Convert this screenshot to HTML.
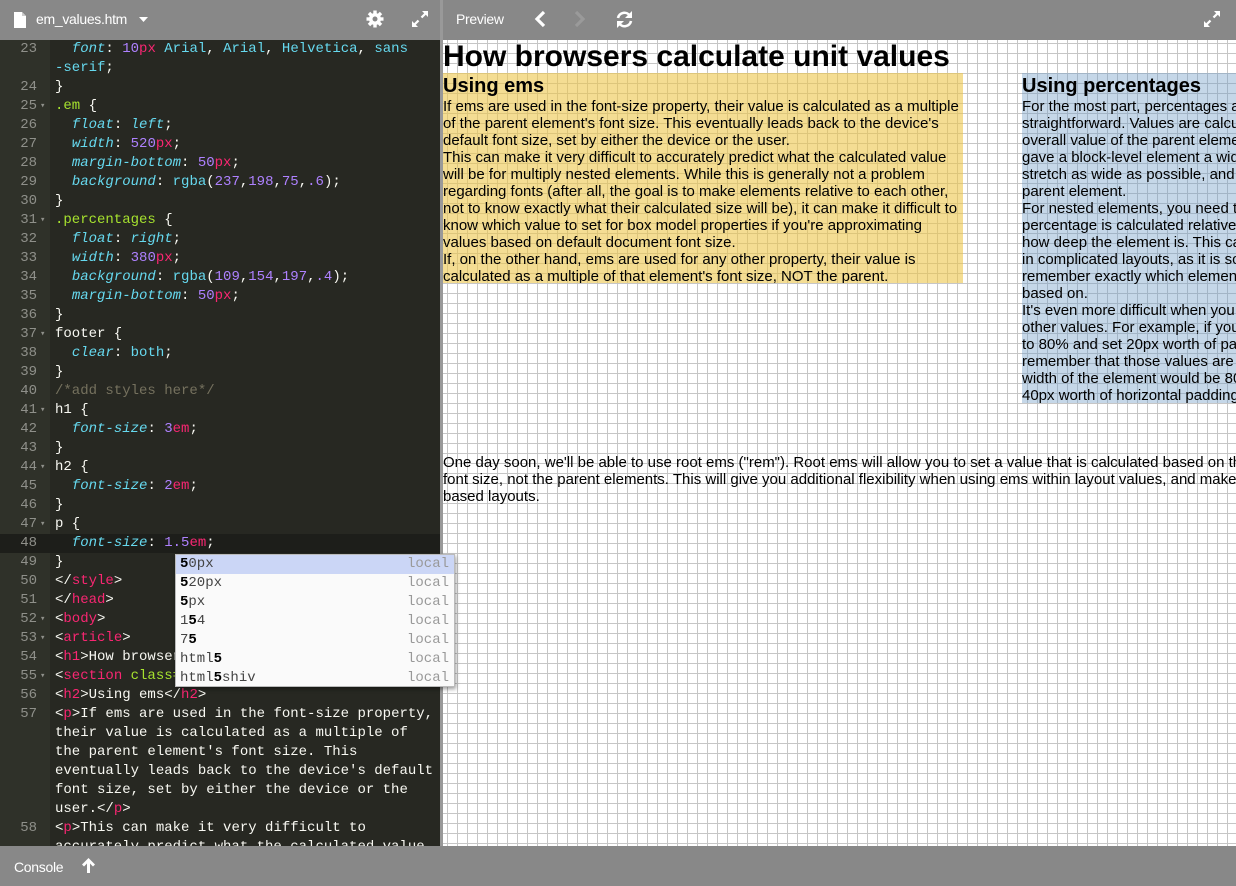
<!DOCTYPE html>
<html><head><meta charset="utf-8"><style>
*{margin:0;padding:0;box-sizing:border-box}
body{width:1236px;height:886px;overflow:hidden;background:#888;font-family:"Liberation Sans",Arial,sans-serif;position:relative}
.bar{position:absolute;left:0;top:0;width:1236px;height:40px;background:#888}
.sep{position:absolute;left:440px;top:0;width:3px;height:846px;background:#999}
.bt{position:absolute;color:#fff;font-size:14px;letter-spacing:-0.3px}
.editor{position:absolute;left:0;top:40px;width:440px;height:806px;background:#272822;overflow:hidden}
.gutter{position:absolute;left:0;top:0;width:50px;height:806px;background:#2f3129}
.code{position:absolute;left:0;top:0px;width:440px;font-family:"Liberation Mono",monospace;font-size:14px;color:#f8f8f2}
.r{height:19px;line-height:19px;white-space:pre;position:relative}
.n{display:inline-block;width:37px;text-align:right;color:#8f908a;margin-right:18px}
.f{position:absolute;left:40px;top:0;color:#8f908a;font-size:9px}
.act{background:#1d1e1a}
.p{color:#66d9ef;font-style:italic}.v{color:#ae81ff}.u{color:#f92672}.s{color:#a6e22e}.c{color:#66d9ef}.t{color:#f92672}.cm{color:#75715e}
.pop{position:absolute;z-index:5;left:175px;top:554px;width:280px;height:133px;background:#fafafa;border:1px solid #bbb;box-shadow:1px 2px 4px rgba(0,0,0,.4);font-family:"Liberation Mono",monospace;font-size:14px;color:#444}
.pop div{height:19px;line-height:19px;padding-left:4px;position:relative}
.pop div i{position:absolute;right:5px;font-style:normal;color:#999}
.pop b{color:#000}
.pop .sel{background:#cbd6f6}
.prev{position:absolute;left:443px;top:40px;width:793px;height:806px;background-color:#fff;
background-image:linear-gradient(to right,#c6c6c6 1px,transparent 1px),linear-gradient(to bottom,#c6c6c6 1px,transparent 1px);
background-size:10px 10px;background-position:4px 3px;overflow:hidden;color:#000}
.h1{position:absolute;left:0;top:0;font-size:30px;font-weight:bold;line-height:34px;white-space:nowrap}
.box{position:absolute;font-size:15px;line-height:17px;white-space:nowrap;overflow:hidden}
.box h2{font-size:20px;line-height:24px;margin-top:1px;margin-bottom:0}
.foot{position:absolute;left:0;top:414px;font-size:15px;line-height:17px;white-space:nowrap}
.bot{position:absolute;left:0;top:846px;width:1236px;height:40px;background:#888}
</style></head><body>
<div class="bar"></div>
<svg style="position:absolute;left:14px;top:12px" width="12" height="16" viewBox="0 0 12 16"><path d="M0 0h8l4 4v12H0z" fill="#fff"/><path d="M8 0v4h4" fill="#ccc"/></svg>
<div class="bt" style="left:36px;top:11px">em_values.htm</div>
<svg style="position:absolute;left:139px;top:17px" width="9" height="6"><path d="M0 0h9L4.5 5z" fill="#fff"/></svg>
<svg style="position:absolute;left:366px;top:10px" width="18" height="18" viewBox="0 0 18 18"><g fill="#fff"><circle cx="9" cy="9" r="6"/><rect x="7.3" y="0.5" width="3.4" height="17"/><rect x="0.5" y="7.3" width="17" height="3.4"/><rect x="7.3" y="0.5" width="3.4" height="17" transform="rotate(45 9 9)"/><rect x="7.3" y="0.5" width="3.4" height="17" transform="rotate(-45 9 9)"/></g><circle cx="9" cy="9" r="2.5" fill="#888"/></svg>
<svg style="position:absolute;left:411px;top:10px" width="18" height="18" viewBox="0 0 18 18"><g fill="#fff"><path d="M11 1h6v6l-2.2-2.2-3.5 3.5-1.6-1.6 3.5-3.5z"/><path d="M7 17H1v-6l2.2 2.2 3.5-3.5 1.6 1.6-3.5 3.5z"/></g></svg>
<div class="sep"></div>
<div class="bt" style="left:456px;top:11px">Preview</div>
<svg style="position:absolute;left:533px;top:10px" width="14" height="18"><path d="M11 2L4 9l7 7" stroke="#fff" stroke-width="3.2" fill="none"/></svg>
<svg style="position:absolute;left:573px;top:10px" width="14" height="18"><path d="M3 2l7 7-7 7" stroke="#9a9a9a" stroke-width="3.2" fill="none"/></svg>
<svg style="position:absolute;left:615px;top:10px" width="19" height="19" viewBox="0 0 19 19"><g stroke="#fff" stroke-width="2.6" fill="none"><path d="M3 8a6.5 6.5 0 0 1 12-2"/><path d="M16 11a6.5 6.5 0 0 1-12 2"/></g><path d="M17 1v7h-7z" fill="#fff"/><path d="M2 18v-7h7z" fill="#fff"/></svg>
<svg style="position:absolute;left:1203px;top:10px" width="18" height="18" viewBox="0 0 18 18"><g fill="#fff"><path d="M11 1h6v6l-2.2-2.2-3.5 3.5-1.6-1.6 3.5-3.5z"/><path d="M7 17H1v-6l2.2 2.2 3.5-3.5 1.6 1.6-3.5 3.5z"/></g></svg>

<div class="editor"><div class="gutter"></div>
<div class="code">
<div class="r"><span class="n">23</span>  <span class="p">font</span>: <span class="v">10</span><span class="u">px</span> <span class="c">Arial</span>, <span class="c">Arial</span>, <span class="c">Helvetica</span>, <span class="c">sans</span></div>
<div class="r"><span class="n"></span><span class="c">-serif</span>;</div>
<div class="r"><span class="n">24</span>}</div>
<div class="r"><span class="n">25</span><span class="f">▾</span><span class="s">.em</span> {</div>
<div class="r"><span class="n">26</span>  <span class="p">float</span>: <span class="p">left</span>;</div>
<div class="r"><span class="n">27</span>  <span class="p">width</span>: <span class="v">520</span><span class="u">px</span>;</div>
<div class="r"><span class="n">28</span>  <span class="p">margin-bottom</span>: <span class="v">50</span><span class="u">px</span>;</div>
<div class="r"><span class="n">29</span>  <span class="p">background</span>: <span class="c">rgba</span>(<span class="v">237</span>,<span class="v">198</span>,<span class="v">75</span>,<span class="v">.6</span>);</div>
<div class="r"><span class="n">30</span>}</div>
<div class="r"><span class="n">31</span><span class="f">▾</span><span class="s">.percentages</span> {</div>
<div class="r"><span class="n">32</span>  <span class="p">float</span>: <span class="p">right</span>;</div>
<div class="r"><span class="n">33</span>  <span class="p">width</span>: <span class="v">380</span><span class="u">px</span>;</div>
<div class="r"><span class="n">34</span>  <span class="p">background</span>: <span class="c">rgba</span>(<span class="v">109</span>,<span class="v">154</span>,<span class="v">197</span>,<span class="v">.4</span>);</div>
<div class="r"><span class="n">35</span>  <span class="p">margin-bottom</span>: <span class="v">50</span><span class="u">px</span>;</div>
<div class="r"><span class="n">36</span>}</div>
<div class="r"><span class="n">37</span><span class="f">▾</span>footer {</div>
<div class="r"><span class="n">38</span>  <span class="p">clear</span>: <span class="c">both</span>;</div>
<div class="r"><span class="n">39</span>}</div>
<div class="r"><span class="n">40</span><span class="cm">/*add styles here*/</span></div>
<div class="r"><span class="n">41</span><span class="f">▾</span>h1 {</div>
<div class="r"><span class="n">42</span>  <span class="p">font-size</span>: <span class="v">3</span><span class="u">em</span>;</div>
<div class="r"><span class="n">43</span>}</div>
<div class="r"><span class="n">44</span><span class="f">▾</span>h2 {</div>
<div class="r"><span class="n">45</span>  <span class="p">font-size</span>: <span class="v">2</span><span class="u">em</span>;</div>
<div class="r"><span class="n">46</span>}</div>
<div class="r"><span class="n">47</span><span class="f">▾</span>p {</div>
<div class="r act"><span class="n">48</span>  <span class="p">font-size</span>: <span class="v">1.5</span><span class="u">em</span>;</div>
<div class="r"><span class="n">49</span>}</div>
<div class="r"><span class="n">50</span>&lt;/<span class="t">style</span>&gt;</div>
<div class="r"><span class="n">51</span>&lt;/<span class="t">head</span>&gt;</div>
<div class="r"><span class="n">52</span><span class="f">▾</span>&lt;<span class="t">body</span>&gt;</div>
<div class="r"><span class="n">53</span><span class="f">▾</span>&lt;<span class="t">article</span>&gt;</div>
<div class="r"><span class="n">54</span>&lt;<span class="t">h1</span>&gt;How browsers calculate</div>
<div class="r"><span class="n">55</span><span class="f">▾</span>&lt;<span class="t">section</span> <span class="s">class=</span>"em"&gt;</div>
<div class="r"><span class="n">56</span>&lt;<span class="t">h2</span>&gt;Using ems&lt;/<span class="t">h2</span>&gt;</div>
<div class="r"><span class="n">57</span>&lt;<span class="t">p</span>&gt;If ems are used in the font-size property,</div>
<div class="r"><span class="n"></span>their value is calculated as a multiple of</div>
<div class="r"><span class="n"></span>the parent element's font size. This</div>
<div class="r"><span class="n"></span>eventually leads back to the device's default</div>
<div class="r"><span class="n"></span>font size, set by either the device or the</div>
<div class="r"><span class="n"></span>user.&lt;/<span class="t">p</span>&gt;</div>
<div class="r"><span class="n">58</span>&lt;<span class="t">p</span>&gt;This can make it very difficult to</div>
<div class="r"><span class="n"></span>accurately predict what the calculated value</div>
</div></div>

<div class="prev">
<div class="h1">How browsers calculate unit values</div>
<div class="box" style="left:0;top:33px;width:520px;height:210px;background:rgba(237,198,75,.6)">
<h2>Using ems</h2>
<div>If ems are used in the font-size property, their value is calculated as a multiple</div>
<div>of the parent element's font size. This eventually leads back to the device's</div>
<div>default font size, set by either the device or the user.</div>
<div>This can make it very difficult to accurately predict what the calculated value</div>
<div>will be for multiply nested elements. While this is generally not a problem</div>
<div>regarding fonts (after all, the goal is to make elements relative to each other,</div>
<div>not to know exactly what their calculated size will be), it can make it difficult to</div>
<div>know which value to set for box model properties if you're approximating</div>
<div>values based on default document font size.</div>
<div>If, on the other hand, ems are used for any other property, their value is</div>
<div>calculated as a multiple of that element's font size, NOT the parent.</div>
</div>
<div class="box" style="left:579px;top:33px;width:380px;height:330px;background:rgba(109,154,197,.4)">
<h2>Using percentages</h2>
<div>For the most part, percentages are fairly</div>
<div>straightforward. Values are calculated from the</div>
<div>overall value of the parent element. If you</div>
<div>gave a block-level element a width of 100% it would</div>
<div>stretch as wide as possible, and fill the</div>
<div>parent element.</div>
<div>For nested elements, you need to be aware that</div>
<div>percentage is calculated relative to the parent</div>
<div>how deep the element is. This can be confusing</div>
<div>in complicated layouts, as it is sometimes hard to</div>
<div>remember exactly which element a value is</div>
<div>based on.</div>
<div>It's even more difficult when you combine it with</div>
<div>other values. For example, if you set a width</div>
<div>to 80% and set 20px worth of padding, you must</div>
<div>remember that those values are additive. The</div>
<div>width of the element would be 80% plus</div>
<div>40px worth of horizontal padding.</div>
</div>
<div class="foot">
<div>One day soon, we'll be able to use root ems ("rem"). Root ems will allow you to set a value that is calculated based on the root</div>
<div>font size, not the parent elements. This will give you additional flexibility when using ems within layout values, and make</div>
<div>based layouts.</div>
</div>
</div>

<div class="pop">
<div class="sel"><b>5</b>0px<i>local</i></div>
<div><b>5</b>20px<i>local</i></div>
<div><b>5</b>px<i>local</i></div>
<div>1<b>5</b>4<i>local</i></div>
<div>7<b>5</b><i>local</i></div>
<div>html<b>5</b><i>local</i></div>
<div>html<b>5</b>shiv<i>local</i></div>
</div>

<div class="bot"></div>
<div class="bt" style="left:14px;top:859px">Console</div>
<svg style="position:absolute;left:80px;top:857px" width="17" height="17" viewBox="0 0 17 17"><path d="M8.5 1L2 7.5l2 2 3-3V16h3V6.5l3 3 2-2z" fill="#fff"/></svg>
</body></html>
